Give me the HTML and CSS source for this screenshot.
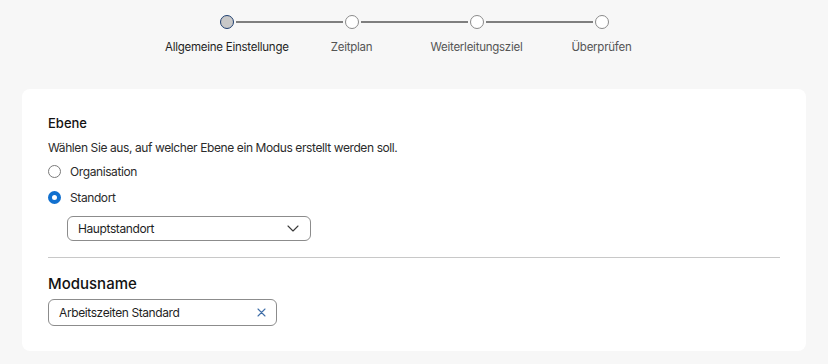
FILE: index.html
```html
<!DOCTYPE html>
<html lang="de">
<head>
  <meta charset="UTF-8">
  <meta name="viewport" content="width=device-width, initial-scale=1.0">
  <title>Modus erstellen</title>
  <link rel="stylesheet" href="styles.css">
</head>
<body>
  <ol class="stepper">
    <li class="step step-active">
      <div class="step-head"><span class="step-line"></span><span class="step-dot"></span><span class="step-line"></span></div>
      <div class="step-label">Allgemeine Einstellungen</div>
    </li>
    <li class="step">
      <div class="step-head"><span class="step-line"></span><span class="step-dot"></span><span class="step-line"></span></div>
      <div class="step-label">Zeitplan</div>
    </li>
    <li class="step">
      <div class="step-head"><span class="step-line"></span><span class="step-dot"></span><span class="step-line"></span></div>
      <div class="step-label">Weiterleitungsziel</div>
    </li>
    <li class="step">
      <div class="step-head"><span class="step-line"></span><span class="step-dot"></span><span class="step-line"></span></div>
      <div class="step-label">Überprüfen</div>
    </li>
  </ol>

  <div class="card">
    <h2 class="section-title section-title-small">Ebene</h2>
    <p class="section-desc">Wählen Sie aus, auf welcher Ebene ein Modus erstellt werden soll.</p>

    <div class="radio-group">
      <label class="radio">
        <input type="radio" name="level" value="org">
        <span class="radio-mark"></span>
        Organisation
      </label>
      <label class="radio">
        <input type="radio" name="level" value="location" checked>
        <span class="radio-mark"></span>
        Standort
      </label>
    </div>

    <div class="select">
      <span>Hauptstandort</span>
      <svg class="select-arrow" width="12" height="7" viewBox="0 0 12 7">
        <path d="M1 1 L6 6 L11 1" fill="none" stroke="#3a3a3a" stroke-width="1.1" stroke-linecap="round" stroke-linejoin="round"/>
      </svg>
    </div>

    <hr class="divider">

    <h2 class="section-title">Modusname</h2>
    <div class="text-input">
      <span>Arbeitszeiten Standard</span>
      <svg class="clear-icon" width="9" height="9" viewBox="0 0 9 9">
        <path d="M1 1 L8 8 M8 1 L1 8" stroke="#3f6ea8" stroke-width="1.1" stroke-linecap="round"/>
      </svg>
    </div>
  </div>
</body>
</html>
```

FILE: styles.css
```css
body {
  font-family: Inter, "Noto Sans", sans-serif;
  margin: 0;
  padding: 0 22px;
  background-color: #f7f7f7;
  color: #1a1a1a;
}
.stepper {
  list-style: none;
  margin: 0 auto;
  padding: 15px 0 0;
  display: grid;
  grid-template-columns: repeat(4, 125px);
  justify-content: center;
}
.step-head {
  display: flex;
  align-items: center;
  height: 14px;
}
.step-line {
  flex: 1;
  height: 2px;
  background-color: #7f7f7f;
}
.step:first-child .step-line:first-child,
.step:last-child .step-line:last-child {
  visibility: hidden;
}
.step-dot {
  width: 12px;
  height: 12px;
  border: 1px solid #8a8a8a;
  border-radius: 50%;
  background-color: #fff;
  margin: 0 2px;
}
.step-active .step-dot {
  background-color: #c8c8c8;
  border-color: #1f3f70;
}
.step-label {
  margin-top: 11px;
  font-size: 11.5px;
  line-height: 14px;
  letter-spacing: -0.25px;
  color: #555;
  text-align: center;
  white-space: nowrap;
  overflow: hidden;
}
.step-active .step-label {
  color: #1f1f1f;
  text-align: left;
  padding-left: 1px;
}
.card {
  margin-top: 35px;
  background-color: #fff;
  border-radius: 8px;
  padding: 24px 26px 25px;
  letter-spacing: -0.4px;
}
.section-title {
  margin: 0;
  font-size: 15px;
  font-weight: 500;
  line-height: 20px;
  letter-spacing: 0;
  color: #121212;
}
.section-title-small {
  font-size: 13px;
  font-weight: 450;
}
.section-desc {
  margin: 7px 0 5px;
  font-size: 12px;
  line-height: 16px;
  color: #2b2b2b;
}
.radio-group {
  display: flex;
  flex-direction: column;
  gap: 6px;
}
.radio {
  display: flex;
  align-items: center;
  height: 20px;
  font-size: 12px;
  color: #2b2b2b;
}
.radio input {
  display: none;
}
.radio-mark {
  width: 11px;
  height: 11px;
  border: 1px solid #7a7a7a;
  border-radius: 50%;
  margin-right: 9px;
}
.radio input:checked + .radio-mark {
  width: 5px;
  height: 5px;
  border: 4px solid #1170cf;
}
.select {
  margin: 9px 0 0 19px;
  width: 244px;
  height: 25px;
  box-sizing: border-box;
  border: 1px solid #8c8c8c;
  border-radius: 6px;
  padding: 0 11px 0 10px;
  display: flex;
  align-items: center;
  justify-content: space-between;
  font-size: 12px;
  color: #1f1f1f;
}
.divider {
  border: none;
  border-top: 1px solid #c8c8c8;
  margin: 16px 0 16px;
}
.text-input {
  margin-top: 5px;
  width: 229px;
  height: 27px;
  box-sizing: border-box;
  border: 1px solid #8c8c8c;
  border-radius: 6px;
  padding: 0 10px;
  display: flex;
  align-items: center;
  justify-content: space-between;
  font-size: 12px;
  color: #1f1f1f;
}
```
